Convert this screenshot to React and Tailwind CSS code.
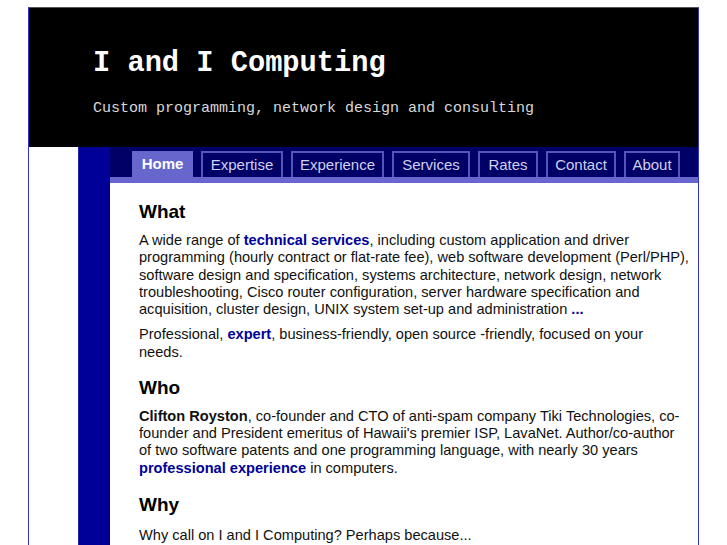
export default function App() {
  const tabs = [
    { label: "Home", w: "w-[61px]", active: true },
    { label: "Expertise", w: "w-[82px]" },
    { label: "Experience", w: "w-[93px]" },
    { label: "Services", w: "w-[78px]" },
    { label: "Rates", w: "w-[60px]" },
    { label: "Contact", w: "w-[70px]" },
    { label: "About", w: "w-[56px]" },
  ];
  const link = "font-bold text-[#000099]";
  return (
    <div className="min-h-[545px] bg-white pt-[7px] font-['Liberation_Sans',Arial,sans-serif]">
      <div className="ml-[28px] w-[671px] min-h-[538px] border-x border-[#3333cc] border-t border-t-[#555]">
        <header className="h-[139px] bg-black pl-[64px] pt-[39px] font-['Liberation_Mono','Courier_New',monospace]">
          <h1 className="text-[28.7px] leading-[34px] font-bold text-white">I and I Computing</h1>
          <p className="mt-[19px] text-[15px] leading-[18px] text-[#d8d8d8]">
            Custom programming, network design and consulting
          </p>
        </header>
        <div className="flex min-h-[398px]">
          <div className="w-[49px] bg-white" />
          <div className="w-[32px] bg-[#000099] border-l border-[#2222aa]" />
          <div className="flex-1">
            <nav className="h-[30px] bg-[#000066] pl-[22px] flex items-end gap-2">
              {tabs.map((t) =>
                t.active ? (
                  <div
                    key={t.label}
                    className={`${t.w} h-[26px] bg-[#6666cc] text-white font-bold text-[15px] flex items-center justify-center`}
                  >
                    {t.label}
                  </div>
                ) : (
                  <div
                    key={t.label}
                    className={`${t.w} h-[26px] border-2 border-b-0 border-[#5555bb] text-[#d0d0f0] text-[15px] flex items-center justify-center`}
                  >
                    {t.label}
                  </div>
                )
              )}
            </nav>
            <div className="h-[6px] bg-[#6666cc]" />
            <main className="pl-[29px] pr-0 pt-[18px] text-[14.6px] leading-[17.25px] text-[#111] whitespace-nowrap">
              <h2 className="text-[19px] leading-[22px] font-bold text-black">What</h2>
              <p className="mt-[9px]">
                A wide range of <span className={link}>technical services</span>, including custom application and driver
                <br />
                programming (hourly contract or flat-rate fee), web software development (Perl/PHP),
                <br />
                software design and specification, systems architecture, network design, network
                <br />
                troubleshooting, Cisco router configuration, server hardware specification and
                <br />
                acquisition, cluster design, UNIX system set-up and administration <span className={link}>...</span>
              </p>
              <p className="mt-[8px]">
                Professional, <span className={link}>expert</span>, business-friendly, open source -friendly, focused on
                your
                <br />
                needs.
              </p>
              <h2 className="mt-[16px] text-[19px] leading-[22px] font-bold text-black">Who</h2>
              <p className="mt-[9px]">
                <span className="font-bold">Clifton Royston</span>, co-founder and CTO of anti-spam company Tiki
                Technologies, co-
                <br />
                founder and President emeritus of Hawaii's premier ISP, LavaNet. Author/co-author
                <br />
                of two software patents and one programming language, with nearly 30 years
                <br />
                <span className={link}>professional experience</span> in computers.
              </p>
              <h2 className="mt-[17px] text-[19px] leading-[22px] font-bold text-black">Why</h2>
              <p className="mt-[11px]">Why call on I and I Computing? Perhaps because...</p>
            </main>
          </div>
        </div>
      </div>
    </div>
  );
}
